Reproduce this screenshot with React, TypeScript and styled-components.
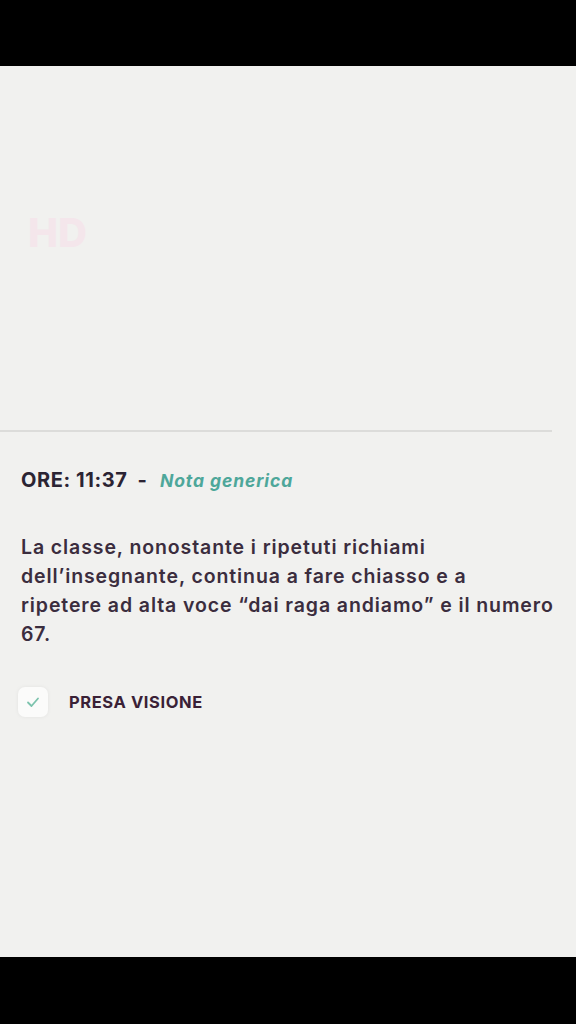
import React from "react";
import styled, { createGlobalStyle } from "styled-components";

const Global = createGlobalStyle`
  html, body { margin: 0; padding: 0; background: #000; }
  body { font-family: "Inter", "Noto Sans", sans-serif; }
`;

const Screen = styled.div`
  width: 576px;
  height: 1024px;
  background: #000;
  display: flex;
  flex-direction: column;
`;

const BlackBar = styled.div<{ $h: number }>`
  height: ${(p) => p.$h}px;
  background: #000;
  flex: none;
`;

const Page = styled.div`
  flex: none;
  height: 891px;
  background: #f1f1ef;
  display: flex;
  flex-direction: column;
`;

const Hero = styled.div`
  height: 364px;
  padding-left: 28px;
  display: flex;
  align-items: center;
  box-sizing: border-box;
`;

const Watermark = styled.span`
  font-family: "Inter", sans-serif;
  font-weight: 800;
  font-size: 40px;
  color: #f4e6eb;
  margin-top: -32px;
`;

const Divider = styled.div`
  height: 2px;
  width: 552px;
  background: #dcdcda;
`;

const Content = styled.div`
  padding: 36px 21px 0 21px;
  display: flex;
  flex-direction: column;
`;

const Heading = styled.div`
  display: flex;
  align-items: baseline;
  height: 24px;
`;

const Time = styled.span`
  font-weight: 700;
  font-size: 20px;
  color: #2b2433;
  letter-spacing: 0.6px;
`;

const Dash = styled.span`
  font-weight: 700;
  font-size: 20px;
  color: #2b2433;
  margin: 0 13px 0 10px;
`;

const Kind = styled.span`
  font-weight: 700;
  font-style: italic;
  font-size: 17.5px;
  color: #4ea79a;
  letter-spacing: 0.9px;
`;

const Body = styled.p`
  margin: 41px 0 0 0;
  font-weight: 600;
  font-size: 19.5px;
  line-height: 29px;
  color: #3b2d3e;
  width: 540px;
  letter-spacing: 0.9px;
`;

const CheckRow = styled.div`
  display: flex;
  align-items: center;
  margin-top: 38px;
  margin-left: -3px;
  gap: 21px;
`;

const Box = styled.div`
  width: 30px;
  height: 30px;
  border-radius: 7px;
  background: #fbfbfa;
  box-shadow: 0 0 4px rgba(0, 0, 0, 0.06);
  display: flex;
  align-items: center;
  justify-content: center;
`;

const CheckLabel = styled.span`
  font-weight: 700;
  font-size: 16.5px;
  color: #3a2136;
  letter-spacing: 0.6px;
`;

export default function App() {
  return (
    <Screen>
      <Global />
      <BlackBar $h={66} />
      <Page>
        <Hero>
          <Watermark>HD</Watermark>
        </Hero>
        <Divider />
        <Content>
          <Heading>
            <Time>ORE: 11:37</Time>
            <Dash>-</Dash>
            <Kind>Nota generica</Kind>
          </Heading>
          <Body>
            La classe, nonostante i ripetuti richiami dell’insegnante, continua a fare chiasso e a
            <br />
            ripetere ad alta voce “dai raga andiamo” e il numero 67.
          </Body>
          <CheckRow>
            <Box>
              <svg width="16" height="16" viewBox="0 0 16 16" fill="none">
                <path d="M3 8.5 L6.5 12 L13 4.5" stroke="#7cc3ad" strokeWidth="1.8" strokeLinecap="round" strokeLinejoin="round" />
              </svg>
            </Box>
            <CheckLabel>PRESA VISIONE</CheckLabel>
          </CheckRow>
        </Content>
      </Page>
      <BlackBar $h={67} />
    </Screen>
  );
}
